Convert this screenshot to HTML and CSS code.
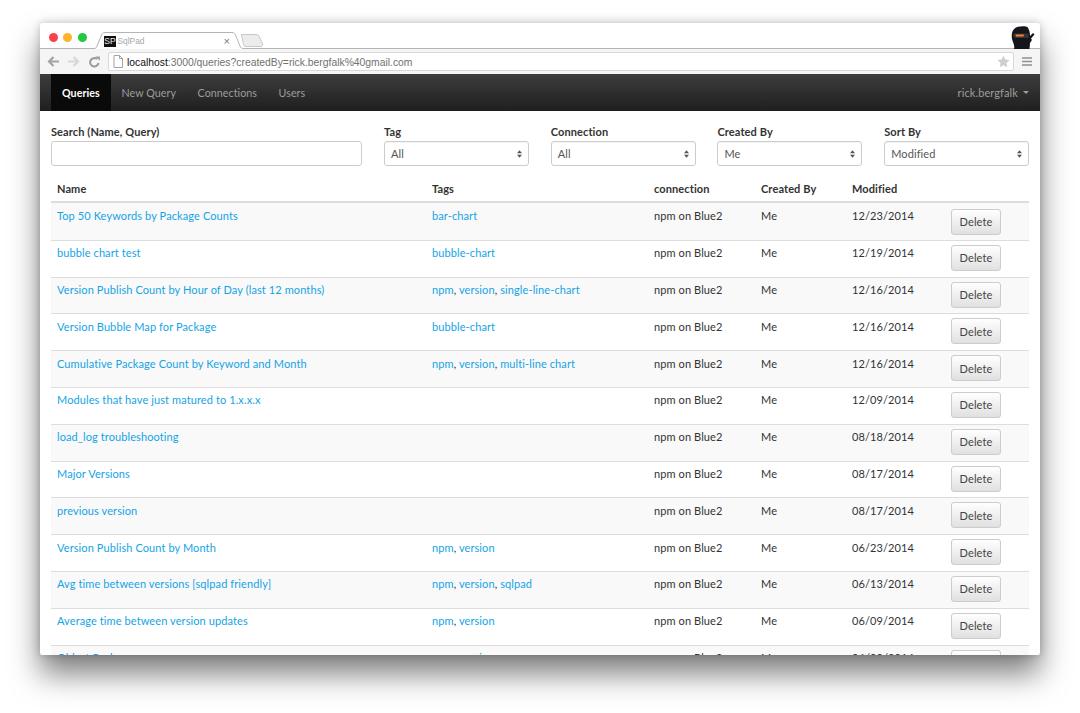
FILE: index.html
```html
<!DOCTYPE html>
<html lang="en">
<head>
<meta charset="utf-8">
<title>SqlPad</title>
<link rel="stylesheet" href="styles.css">
</head>
<body>
<div class="window">
  <div class="tabstrip">
    <div class="lights"><span class="light red"></span><span class="light yellow"></span><span class="light green"></span></div>
    <div class="tab">
      <svg class="tab-shape" width="176" height="17" viewBox="0 0 176 17"><path d="M0 17V16.500H1C3 16.500 3.500 15.500 4 14L8.500 3C9 1.500 10 .5 12 .5H139C141 .5 142 1.500 142.500 3L147 14C147.500 15.500 148.500 16.500 150.500 16.500V17Z" fill="#fff"/><path d="M0 16.500H1C3 16.500 3.500 15.500 4 14L8.500 3C9 1.500 10 .5 12 .5H139C141 .5 142 1.500 142.500 3L147 14C147.500 15.500 148.500 16.500 150.500 16.500" fill="none" stroke="#b4b4b4"/><path d="M148.500 2.500H163C165 2.500 165.500 3 166.500 5L169.500 12C170 13.500 169 14.500 168 14.500H153C151.500 14.500 151 14 150.500 12.500Z" fill="#ececec" stroke="#c8c8c8"/></svg>
      <span class="favicon">SP</span><span class="tab-title">SqlPad</span><span class="tab-close">×</span>
    </div>
    <svg class="ninja" width="24" height="23" viewBox="0 0 24 23"><path d="M1 13C0 7 2 2 7 .8 10 0 15 0 16.500 1 18.500 4 19 7 19 10L22 7 23.500 8.500 20 12.500 21 14 19 17 18.500 23H3C4 19 2 17 1 13Z" fill="#14161c"/><path d="M1.500 8.500 4 7.500H17.500V12H4Z" fill="#3c3230"/><path d="M4.500 8.500H13L12.500 10.500H5Z" fill="#ec8444"/></svg>
  </div>
  <div class="toolbar">
    <svg class="tool" width="12" height="11" viewBox="0 0 12 11"><path d="M12 5.500H3M6.500 1 2 5.500 6.500 10" fill="none" stroke="#a4a4a4" stroke-width="2.200"/></svg>
    <svg class="tool" width="12" height="11" viewBox="0 0 12 11"><path d="M0 5.500H9M5.500 1 10 5.500 5.500 10" fill="none" stroke="#d8d8d8" stroke-width="2.200"/></svg>
    <svg class="tool" width="11" height="12" viewBox="0 0 11 12"><path d="M9.500 7A4.200 4.200 0 1 1 8 3" fill="none" stroke="#999" stroke-width="2"/><path d="M6.500 .5 10.800 .5 10.800 4.800Z" fill="#999"/></svg>
    <div class="omnibox">
      <svg class="page" width="10" height="13" viewBox="0 0 10 13"><path d="M1 .5H6.500L9.500 3.500V12.500H1ZM6.500 .5V3.500H9.500" fill="#fff" stroke="#a4a4a4"/></svg>
      <span class="url"><b>localhost</b>:3000/queries?createdBy=rick.bergfalk%40gmail.com</span>
      <svg class="star" width="13" height="13" viewBox="0 0 24 24"><path d="M12 1l3.400 7.400 8 .9-6 5.400 1.700 8L12 18.800 4.900 22.700l1.700-8-6-5.400 8-.9z" fill="#cfcfcf"/></svg>
    </div>
    <svg class="menu" width="10" height="9" viewBox="0 0 10 9"><path d="M0 1H10M0 4.500H10M0 8H10" stroke="#8f8f8f" stroke-width="1.500"/></svg>
  </div>
  <nav class="navbar">
    <a class="nav-item active">Queries</a>
    <a class="nav-item">New Query</a>
    <a class="nav-item">Connections</a>
    <a class="nav-item">Users</a>
    <a class="nav-user">rick.bergfalk<span class="caret"></span></a>
  </nav>
  <div class="content">
    <div class="filters">
      <div class="field"><label>Search (Name, Query)</label><div class="input"></div></div>
      <div class="field"><label>Tag</label><div class="input select">All<svg width="5" height="8" viewBox="0 0 6 9"><path d="M3 0 6 3.500H0ZM3 9 0 5.500H6Z" fill="#555"/></svg></div></div>
      <div class="field"><label>Connection</label><div class="input select">All<svg width="5" height="8" viewBox="0 0 6 9"><path d="M3 0 6 3.500H0ZM3 9 0 5.500H6Z" fill="#555"/></svg></div></div>
      <div class="field"><label>Created By</label><div class="input select">Me<svg width="5" height="8" viewBox="0 0 6 9"><path d="M3 0 6 3.500H0ZM3 9 0 5.500H6Z" fill="#555"/></svg></div></div>
      <div class="field"><label>Sort By</label><div class="input select">Modified<svg width="5" height="8" viewBox="0 0 6 9"><path d="M3 0 6 3.500H0ZM3 9 0 5.500H6Z" fill="#555"/></svg></div></div>
    </div>
    <div class="table">
      <div class="row head"><div>Name</div><div>Tags</div><div>connection</div><div>Created By</div><div>Modified</div><div></div></div>
      <div class="row"><div><a>Top 50 Keywords by Package Counts</a></div><div><a>bar-chart</a></div><div>npm on Blue2</div><div>Me</div><div>12/23/2014</div><div><button class="del">Delete</button></div></div>
      <div class="row"><div><a>bubble chart test</a></div><div><a>bubble-chart</a></div><div>npm on Blue2</div><div>Me</div><div>12/19/2014</div><div><button class="del">Delete</button></div></div>
      <div class="row"><div><a>Version Publish Count by Hour of Day (last 12 months)</a></div><div><a>npm</a>, <a>version</a>, <a>single-line-chart</a></div><div>npm on Blue2</div><div>Me</div><div>12/16/2014</div><div><button class="del">Delete</button></div></div>
      <div class="row"><div><a>Version Bubble Map for Package</a></div><div><a>bubble-chart</a></div><div>npm on Blue2</div><div>Me</div><div>12/16/2014</div><div><button class="del">Delete</button></div></div>
      <div class="row"><div><a>Cumulative Package Count by Keyword and Month</a></div><div><a>npm</a>, <a>version</a>, <a>multi-line chart</a></div><div>npm on Blue2</div><div>Me</div><div>12/16/2014</div><div><button class="del">Delete</button></div></div>
      <div class="row"><div><a>Modules that have just matured to 1.x.x.x</a></div><div></div><div>npm on Blue2</div><div>Me</div><div>12/09/2014</div><div><button class="del">Delete</button></div></div>
      <div class="row"><div><a>load_log troubleshooting</a></div><div></div><div>npm on Blue2</div><div>Me</div><div>08/18/2014</div><div><button class="del">Delete</button></div></div>
      <div class="row"><div><a>Major Versions</a></div><div></div><div>npm on Blue2</div><div>Me</div><div>08/17/2014</div><div><button class="del">Delete</button></div></div>
      <div class="row"><div><a>previous version</a></div><div></div><div>npm on Blue2</div><div>Me</div><div>08/17/2014</div><div><button class="del">Delete</button></div></div>
      <div class="row"><div><a>Version Publish Count by Month</a></div><div><a>npm</a>, <a>version</a></div><div>npm on Blue2</div><div>Me</div><div>06/23/2014</div><div><button class="del">Delete</button></div></div>
      <div class="row"><div><a>Avg time between versions [sqlpad friendly]</a></div><div><a>npm</a>, <a>version</a>, <a>sqlpad</a></div><div>npm on Blue2</div><div>Me</div><div>06/13/2014</div><div><button class="del">Delete</button></div></div>
      <div class="row"><div><a>Average time between version updates</a></div><div><a>npm</a>, <a>version</a></div><div>npm on Blue2</div><div>Me</div><div>06/09/2014</div><div><button class="del">Delete</button></div></div>
      <div class="row"><div><a>Oldest Packages</a></div><div><a>npm</a>, <a>version</a></div><div>npm on Blue2</div><div>Me</div><div>06/09/2014</div><div><button class="del">Delete</button></div></div>
    </div>
  </div>
</div>
</body>
</html>
```

FILE: styles.css
```css
html, body { margin: 0; height: 100%; background: #fff; overflow: hidden; }
body { font-family: Lato, "Open Sans", sans-serif; font-size: 11px; letter-spacing: .1px; color: #333; padding-top: 23px; box-sizing: border-box; }
.window { margin: 0 40px; height: 632px; display: flex; flex-direction: column; overflow: hidden; background: #fff; border-radius: 4px 4px 2px 2px; box-shadow: 0 19px 30px rgba(0,0,0,.5), 0 0 9px rgba(0,0,0,.22); }
.tabstrip { height: 26px; flex: none; position: relative; display: flex; align-items: center; background: #fff; border-bottom: 1px solid #b4b4b4; box-sizing: border-box; }
.lights { display: flex; gap: 5.500px; margin: 3px 0 0 8.500px; }
.light { width: 9px; height: 9px; border-radius: 50%; }
.red { background: #f9434b; }
.yellow { background: #fcb42a; }
.green { background: #20c93f; }
.tab { position: absolute; left: 53px; top: 9px; width: 176px; height: 17px; display: flex; align-items: center; padding-left: 11px; box-sizing: border-box; font-family: "Liberation Sans", sans-serif; letter-spacing: 0; }
.tab-shape { position: absolute; left: 0; top: 0; }
.favicon { position: relative; margin-top: 1px; width: 12px; height: 11px; background: #111; color: #eee; font: 8.500px/11px "Liberation Sans", sans-serif; text-align: center; letter-spacing: 0; }
.tab-title { position: relative; margin-left: 1.500px; font-size: 8.400px; color: #a8a8a8; }
.tab-close { position: relative; margin-left: 79px; font-size: 11px; color: #777; }
.ninja { position: absolute; right: 5px; top: 3px; }
.toolbar { height: 25px; flex: none; display: flex; align-items: center; padding: 0 8px 0 7px; box-sizing: border-box; background: #f5f5f5; }
.tool { flex: none; margin-right: 9px; }
.omnibox { flex: 1; height: 19px; margin-left: -1px; display: flex; align-items: center; padding: 0 3px 0 4px; background: #fff; border: 1px solid #d8d8d8; border-radius: 2px; box-sizing: border-box; }
.page { flex: none; margin-right: 4px; }
.url { flex: 1; padding-top: 1px; font-family: "Liberation Sans", sans-serif; font-size: 10.350px; letter-spacing: 0; color: #707070; }
.url b { font-weight: 400; color: #111; }
.menu { flex: none; margin-left: 8px; }
.navbar { height: 37px; flex: none; display: flex; align-items: stretch; padding: 0 11px; background: linear-gradient(#3d3d3d, #1f1f1f); color: #9d9d9d; box-sizing: border-box; font-size: 10.700px; letter-spacing: .05px; }
.nav-item { display: flex; align-items: center; padding: 0 10.800px; }
.nav-item.active { background: #0a0a0a; color: #fff; font-weight: 700; padding: 0 11px; }
.nav-user { margin-left: auto; display: flex; align-items: center; font-size: 11px; letter-spacing: .1px; }
.caret { width: 0; height: 0; margin-left: 5px; border: 3px solid transparent; border-top-color: #9d9d9d; border-bottom: 0; }
.content { flex: 1; min-height: 0; padding: 13px 11px 0; overflow: hidden; }
.filters { display: grid; grid-template-columns: 311fr repeat(4, 144.75fr); column-gap: 21.900px; }
.field label { display: block; height: 17px; line-height: 15px; font-weight: 700; }
.input { height: 25px; box-sizing: border-box; border: 1px solid #ccc; border-radius: 3px; background: #fff; }
.select { display: flex; align-items: center; justify-content: space-between; padding: 0 6px; color: #555; box-shadow: inset 0 1px 1px rgba(0,0,0,.04); }
.table { margin-top: 12px; }
.row { display: grid; grid-template-columns: 375px 222px 107px 91px 99px 84px; height: 36.800px; box-sizing: border-box; border-top: 1px solid #ddd; padding-top: 4.500px; line-height: 15px; }
.row > div { padding-left: 6px; white-space: nowrap; }
.row:nth-child(even) { background: #f9f9f9; }
.row a { color: #14a4e6; }
.head { height: 25px; border-top: 0; border-bottom: 2px solid #ddd; padding-top: 3px; font-weight: 700; background: none; }
.head + .row { border-top: 0; }
.del { display: block; width: 50px; height: 26px; margin-top: -.500px; padding: 0; font: inherit; letter-spacing: inherit; color: #444; border: 1px solid #ccc; border-radius: 3px; background: linear-gradient(#fff, #e0e0e0); }
.head + .row .del { margin-top: 1px; }
```
